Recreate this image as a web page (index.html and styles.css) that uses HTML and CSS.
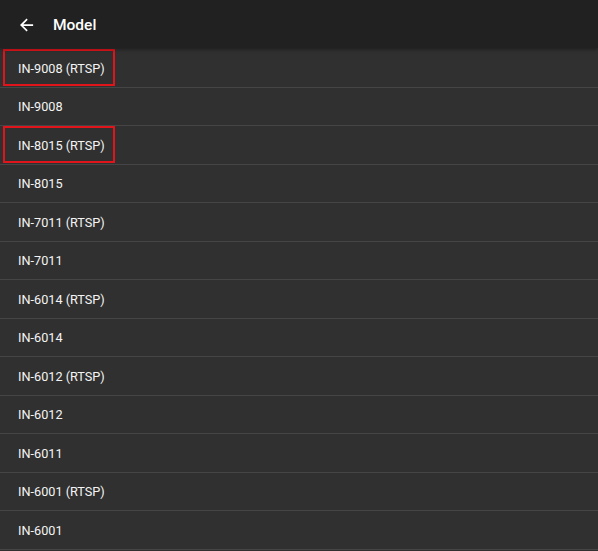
FILE: index.html
```html
<!DOCTYPE html>
<html>
<head>
<meta charset="utf-8">
<link rel="stylesheet" href="styles.css">
</head>
<body>
<header class="appbar">
  <svg class="back" width="16" height="16" viewBox="0 0 16 16"><path d="M15 7H3.8l5-5L7.5.6 0 8l7.5 7.4 1.3-1.4-5-5H15z" fill="#fff"/></svg>
  <h1 class="title">Model</h1>
</header>
<ul class="list">
  <li class="row marked"><span class="box">IN-9008 (RTSP)</span></li>
  <li class="row">IN-9008</li>
  <li class="row marked"><span class="box">IN-8015 (RTSP)</span></li>
  <li class="row">IN-8015</li>
  <li class="row">IN-7011 (RTSP)</li>
  <li class="row">IN-7011</li>
  <li class="row">IN-6014 (RTSP)</li>
  <li class="row">IN-6014</li>
  <li class="row">IN-6012 (RTSP)</li>
  <li class="row">IN-6012</li>
  <li class="row">IN-6011</li>
  <li class="row">IN-6001 (RTSP)</li>
  <li class="row">IN-6001</li>
</ul>
</body>
</html>
```
FILE: styles.css
```css
html, body {
  margin: 0;
  padding: 0;
  background: #303030;
  font-family: Roboto, "Liberation Sans", sans-serif;
  color: #fff;
  overflow: hidden;
}
.appbar {
  box-sizing: border-box;
  height: 48px;
  background: #212121;
  display: flex;
  align-items: center;
  padding-left: 20px;
  padding-top: 1px;
  box-shadow: 0 1px 4px rgba(0,0,0,0.45);
  position: relative;
  z-index: 1;
}
.back {
  width: 14px;
  height: 14px;
}
.title {
  margin: 0 0 0 19px;
  font-size: 15.5px;
  font-weight: 500;
  letter-spacing: 0;
}
.list {
  list-style: none;
  margin: 0;
  padding: 1px 0 0;
}
.row {
  box-sizing: border-box;
  height: 38.5px;
  display: flex;
  align-items: center;
  padding-left: 18px;
  padding-top: 1px;
  font-size: 12.7px;
  border-bottom: 1px solid #454545;
  color: #f4f4f4;
}
.row.marked {
  padding-left: 3px;
  align-items: stretch;
  padding-top: 0;
  padding-bottom: 0.5px;
}
.box {
  box-sizing: border-box;
  width: 112px;
  border: 2px solid #e0141b;
  padding-left: 13px;
  padding-top: 1px;
  display: flex;
  align-items: center;
}
```
